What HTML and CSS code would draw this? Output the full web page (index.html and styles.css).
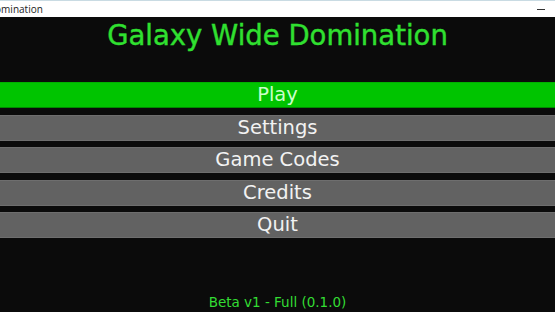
FILE: index.html
```html
<!DOCTYPE html>
<html lang="en">
<head>
    <meta charset="UTF-8">
    <title>Galaxy Wide Domination</title>
    <link rel="stylesheet" href="styles.css">
</head>
<body>
    <!-- Barra da janela -->
    <div class="titlebar">
        <span class="window-title">Galaxy Wide Domination</span>
        <span class="min-button"></span>
    </div>

    <!-- Menu principal -->
    <div class="screen">
        <h1 class="game-title">Galaxy Wide Domination</h1>
        <div class="menu">
            <button class="menu-button active">Play</button>
            <button class="menu-button">Settings</button>
            <button class="menu-button">Game Codes</button>
            <button class="menu-button">Credits</button>
            <button class="menu-button">Quit</button>
        </div>
        <div class="version">Beta v1 - Full (0.1.0)</div>
    </div>
</body>
</html>
```

FILE: styles.css
```css
/* Estilos gerais */
body {
    margin: 0;
    width: 555px;
    height: 312px;
    overflow: hidden;
    background-color: #0b0b0b;
    font-family: "DejaVu Sans", sans-serif;
}

.titlebar {
    height: 16px;
    background-color: #ffffff;
    border-top: 1px solid #c9dbe3;
    display: flex;
    align-items: center;
    justify-content: space-between;
    overflow: hidden;
}

.window-title {
    font-family: "Open Sans", sans-serif;
    font-size: 10px;
    color: #222;
    margin-left: -72px;
    white-space: nowrap;
}

.min-button {
    width: 8px;
    height: 1px;
    background-color: #333;
    margin-right: 10px;
}

.screen {
    height: 295px;
    display: flex;
    flex-direction: column;
}

.game-title {
    margin: 0;
    height: 36px;
    line-height: 36px;
    text-align: center;
    font-size: 27.5px;
    font-weight: normal;
    color: #30e030;
    -webkit-text-stroke: 0.4px #30e030;
}

.menu {
    margin-top: 29px;
    display: flex;
    flex-direction: column;
    gap: 6.5px;
}

.menu-button {
    height: 26px;
    padding: 0;
    border: none;
    border-top: 1px solid #6e6e6e;
    border-bottom: 1px solid #6e6e6e;
    background-color: #626262;
    color: #f2f2f2;
    font-family: "DejaVu Sans", sans-serif;
    font-size: 19.5px;
    line-height: 24px;
    cursor: pointer;
}

.menu-button.active {
    background-color: #00c400;
    border-top-color: #00b000;
    border-bottom-color: #008a00;
    color: #c8ffc8;
}

.version {
    margin-top: auto;
    padding-bottom: 2px;
    line-height: 16px;
    text-align: center;
    font-size: 13.5px;
    color: #33dd33;
}
```
